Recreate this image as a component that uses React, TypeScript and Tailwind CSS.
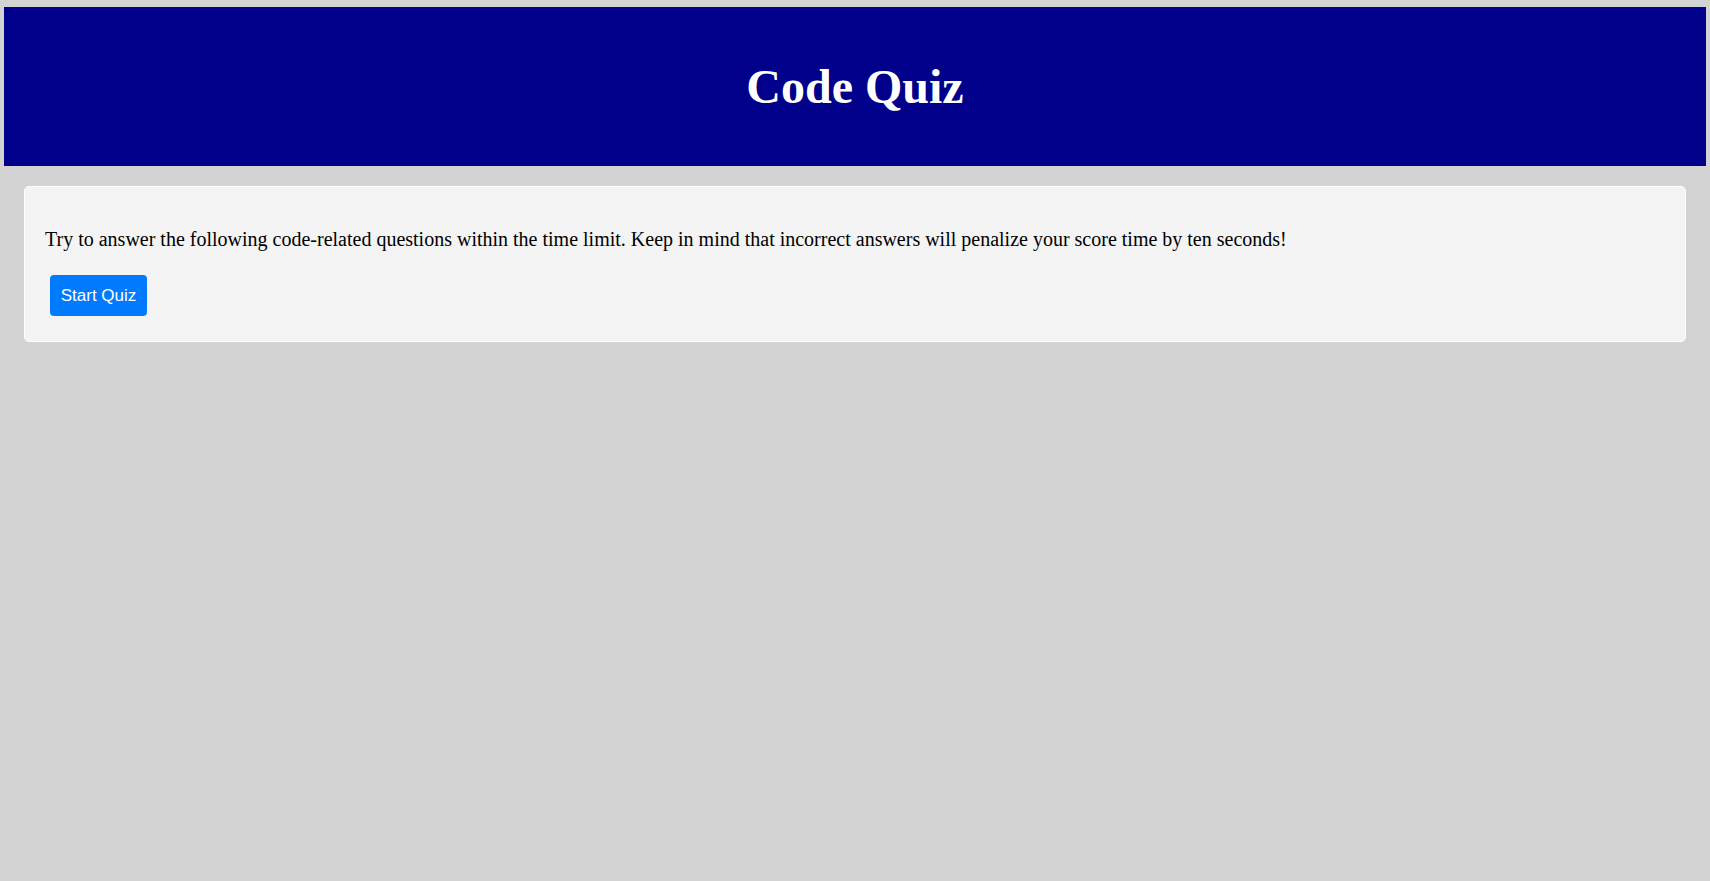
export default function App() {
  return (
    <div className="min-h-screen bg-[#d3d3d3] px-[4px] pt-[7px] font-['Liberation_Serif',serif]">
      <header className="flex h-[159px] items-center justify-center bg-[#00008b]">
        <h1 className="text-[48px] font-bold leading-[53px] text-white">Code Quiz</h1>
      </header>

      <main className="mx-[20px] mt-[20px] rounded-[5px] border border-white bg-[#f4f4f4] px-[20px] pt-[41px] pb-[25px]">
        <p className="text-[20px] leading-[22px] text-black">
          Try to answer the following code-related questions within the time limit. Keep in mind that incorrect
          answers will penalize your score time by ten seconds!
        </p>
        <button className="ml-[5px] mt-[25px] flex h-[41px] w-[97px] items-center justify-center rounded-[4px] bg-[#007bff] font-['Liberation_Sans',sans-serif] text-[17px] text-white">
          Start Quiz
        </button>
      </main>
    </div>
  )
}
